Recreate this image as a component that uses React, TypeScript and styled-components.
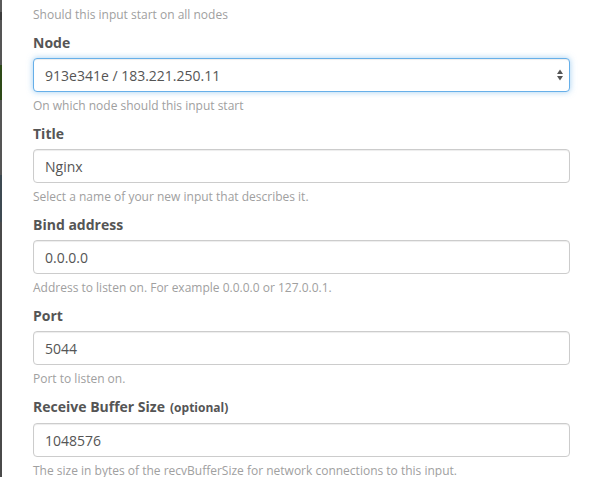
import React from "react";
import styled, { createGlobalStyle } from "styled-components";

const Global = createGlobalStyle`
  html, body { margin: 0; padding: 0; background: #fff; }
  body { font-family: "Open Sans", "Noto Sans", sans-serif; color: #555; }
  * { box-sizing: border-box; }
`;

const Page = styled.div`
  display: flex;
  width: 598px;
  height: 477px;
  overflow: hidden;
  background: #fff;
`;

const Backdrop = styled.div`
  width: 2px;
  flex: 0 0 2px;
  background: linear-gradient(
    to bottom,
    #5a5a5a 0px, #5a5a5a 12px,
    #3c3c3c 12px, #3c3c3c 20px,
    #555 20px, #555 65px,
    #2e4a18 65px, #2e4a18 100px,
    #555 100px, #555 175px,
    #3d4a52 175px, #3d4a52 222px,
    #4a4a4a 222px, #4a4a4a 100%
  );
`;

const Form = styled.div`
  flex: 1;
  padding: 6px 28px 0 31px;
`;

const Group = styled.div`
  display: flex;
  flex-direction: column;
`;

const Label = styled.label`
  display: block;
  font-size: 14px;
  font-weight: 700;
  line-height: 20px;
  color: #555;
  margin-bottom: 5px;
`;

const Optional = styled.small`
  font-size: 12px;
  font-weight: 700;
  margin-left: 2px;
`;

const Help = styled.span`
  display: block;
  font-size: 12px;
  line-height: 17px;
  color: #a0a0a0;
  margin-top: 5px;
  margin-bottom: 10px;
`;

const TopHelp = styled(Help)`
  margin-top: 0;
`;

const Input = styled.div<{ $focus?: boolean }>`
  position: relative;
  height: 34px;
  border-radius: 4px;
  border: 1px solid ${(p) => (p.$focus ? "#66afe9" : "#ccc")};
  box-shadow: ${(p) =>
    p.$focus
      ? "inset 0 1px 1px rgba(0,0,0,.075), 0 0 6px rgba(102,175,233,.6)"
      : "inset 0 1px 1px rgba(0,0,0,.075)"};
  padding: 0 11px;
  display: flex;
  align-items: center;
  font-size: 14px;
  color: #555;
  background: #fff;
`;

const Arrows = styled.svg`
  position: absolute;
  right: 5px;
  top: 50%;
  transform: translateY(-50%);
`;

type FieldProps = {
  label: string;
  optional?: boolean;
  value: string;
  help: string;
  select?: boolean;
};

const Field = ({ label, optional, value, help, select }: FieldProps) => (
  <Group>
    <Label>
      {label}
      {optional && <Optional> (optional)</Optional>}
    </Label>
    <Input $focus={select}>
      {value}
      {select && (
        <Arrows width="8" height="12" viewBox="0 0 8 12">
          <path d="M4 0.5 L7 5 L1 5 Z" fill="#555" />
          <path d="M4 11.5 L7 7 L1 7 Z" fill="#555" />
        </Arrows>
      )}
    </Input>
    <Help>{help}</Help>
  </Group>
);

export default function App() {
  return (
    <>
      <Global />
      <Page>
        <Backdrop />
        <Form>
          <TopHelp>Should this input start on all nodes</TopHelp>
          <Field
            label="Node"
            value="913e341e / 183.221.250.11"
            help="On which node should this input start"
            select
          />
          <Field
            label="Title"
            value="Nginx"
            help="Select a name of your new input that describes it."
          />
          <Field
            label="Bind address"
            value="0.0.0.0"
            help="Address to listen on. For example 0.0.0.0 or 127.0.0.1."
          />
          <Field label="Port" value="5044" help="Port to listen on." />
          <Field
            label="Receive Buffer Size"
            optional
            value="1048576"
            help="The size in bytes of the recvBufferSize for network connections to this input."
          />
        </Form>
      </Page>
    </>
  );
}
